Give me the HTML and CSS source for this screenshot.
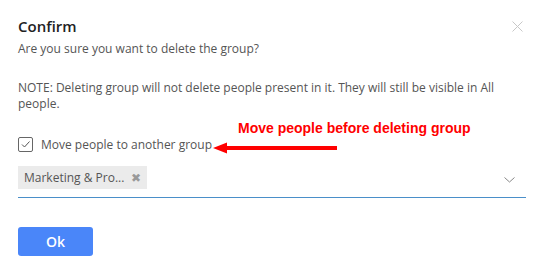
FILE: index.html
```html
<!DOCTYPE html>
<html>
<head>
<meta charset="utf-8">
<link rel="stylesheet" href="styles.css">
</head>
<body>
<div class="dialog">
  <div class="header">
    <h1 class="title">Confirm</h1>
    <svg class="close" width="11" height="11" viewBox="0 0 11 11"><path d="M0.5 0.5 L10.5 10.5 M10.5 0.5 L0.5 10.5" stroke="#c8c8c8" stroke-width="1" fill="none"/></svg>
  </div>
  <p class="text first">Are you sure you want to delete the group?</p>
  <p class="text note">NOTE: Deleting group will not delete people present in it. They will still be visible in All people.</p>
  <label class="check">
    <span class="box"><svg width="11" height="11" viewBox="0 0 11 11"><path d="M2 5.5 L4.5 8 L9.5 2.5" stroke="#555" stroke-width="1" fill="none"/></svg></span>
    <span class="check-label">Move people to another group</span>
  </label>
  <div class="select">
    <span class="chip">Marketing &amp; Pro... <span class="chip-x">✖</span></span>
    <svg class="chevron" width="11" height="6" viewBox="0 0 11 6"><path d="M0.5 0.5 L5.5 5 L10.5 0.5" stroke="#888" stroke-width="1" fill="none"/></svg>
  </div>
  <div class="footer">
    <button class="ok">Ok</button>
  </div>
  <div class="annotation">Move people before deleting group</div>
  <svg class="arrow" width="124" height="12" viewBox="0 0 124 12"><path d="M0 6 L14 0.5 L14 4 L124 4 L124 8 L14 8 L14 11.5 Z" fill="#f00"/></svg>
</div>
</body>
</html>
```
FILE: styles.css
```css
html, body { margin: 0; padding: 0; background: #fff; }
body { font-family: "Open Sans", sans-serif; }
.dialog { position: relative; width: 543px; height: 276px; box-sizing: border-box; padding: 15px 17px 0 18px; }
.header { display: flex; justify-content: space-between; align-items: flex-start; }
.title { margin: 0; font-size: 15px; font-weight: 600; color: #222; line-height: 22px; }
.close { margin-top: 6px; margin-right: 3px; }
.text { margin: 0; font-size: 12px; color: #555; line-height: 16px; }
.first { margin-top: 4px; }
.note { margin-top: 23px; }
.check { display: flex; align-items: center; margin-top: 24px; }
.box { width: 13px; height: 13px; border: 1px solid #666; border-radius: 2px; display: flex; align-items: center; justify-content: center; }
.check-label { margin-left: 8px; font-size: 12px; color: #555; }
.select { display: flex; align-items: center; justify-content: space-between; margin-top: 13px; padding-bottom: 8px; border-bottom: 1px solid #4a8fc9; }
.chip { display: inline-flex; align-items: center; height: 23px; padding: 0 6px 0 6px; background: #ebebeb; font-size: 12px; color: #555; width: 117px; justify-content: space-between; }
.chip-x { font-size: 12px; color: #999; }
.chevron { margin-right: 11px; margin-top: 4px; }
.footer { margin-top: 29px; }
.ok { width: 75px; height: 29px; border: none; border-radius: 3px; background: #4a86f9; color: #fff; font-family: "Open Sans", sans-serif; font-size: 14px; font-weight: 600; padding: 0; }
.annotation { position: absolute; left: 238px; top: 120px; font-family: "Liberation Sans", Arial, sans-serif; font-weight: bold; font-size: 14px; color: #f00; }
.arrow { position: absolute; left: 213px; top: 142px; }
```
